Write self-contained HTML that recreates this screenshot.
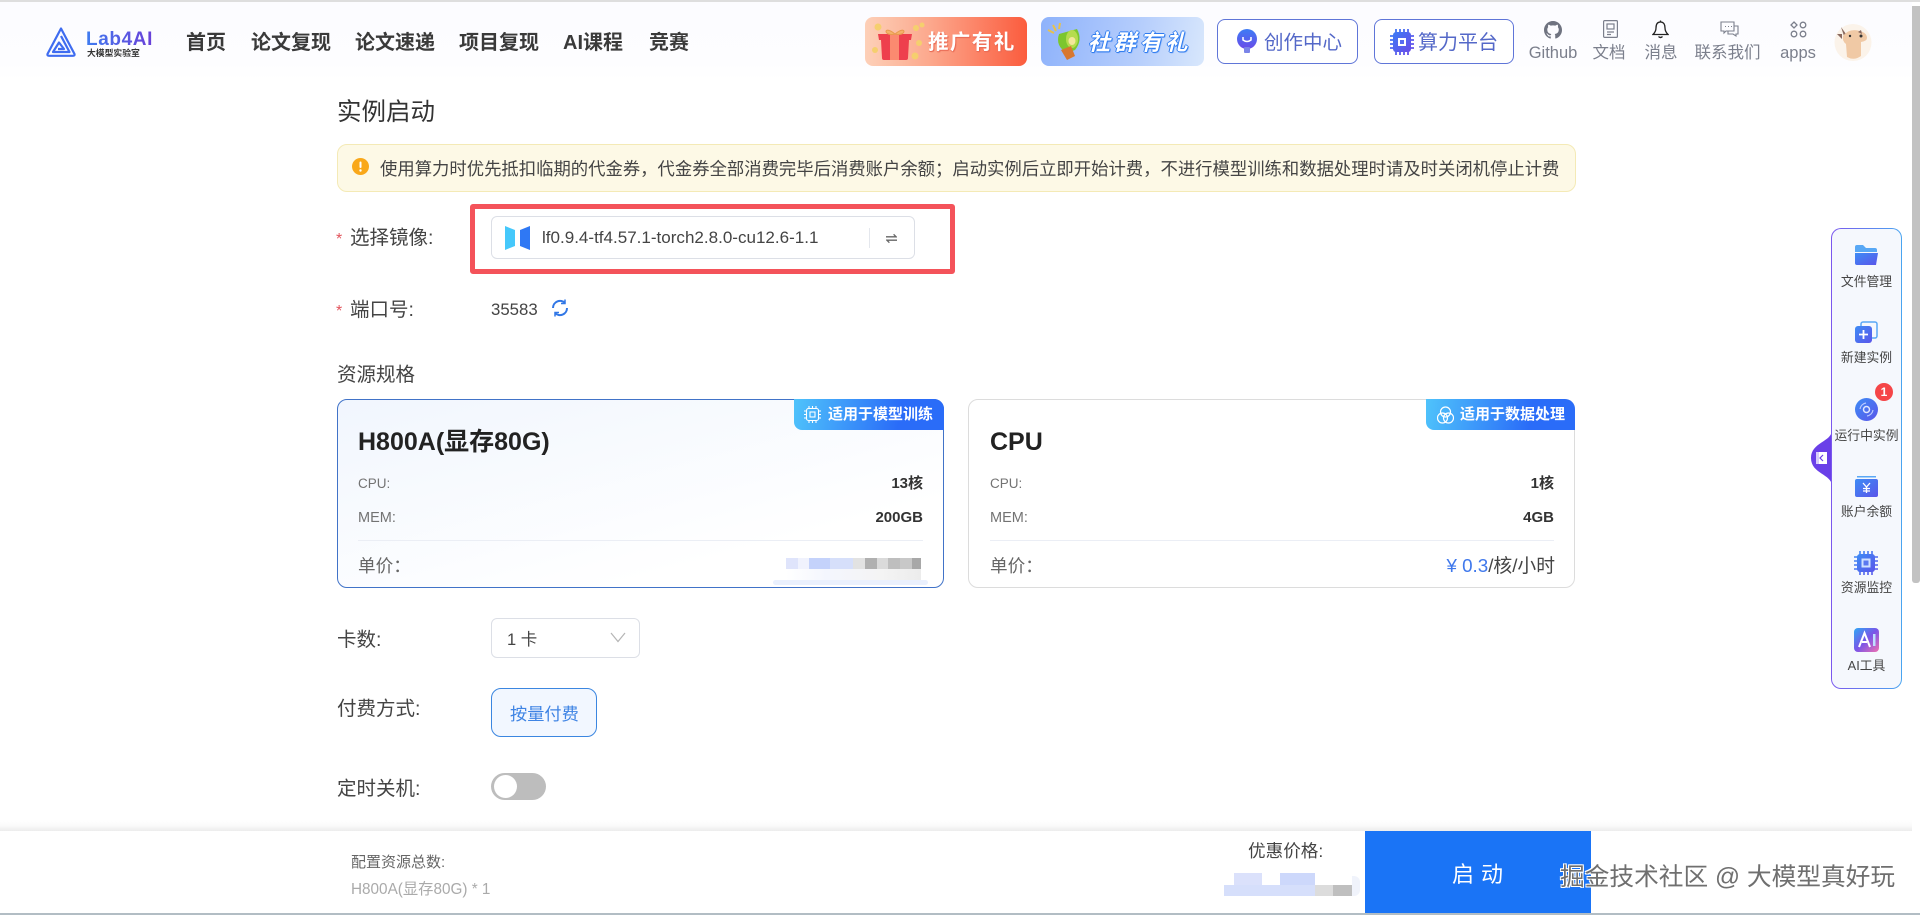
<!DOCTYPE html>
<html lang="zh">
<head>
<meta charset="utf-8">
<title>实例启动</title>
<style>
html,body{margin:0;padding:0;width:1920px;height:915px;overflow:hidden;background:#fff}
body{position:relative;font-family:"Liberation Sans","Noto Sans CJK SC",sans-serif;color:#333}
.t{position:absolute;line-height:30px;height:30px;white-space:nowrap}
.b{position:absolute;box-sizing:border-box}
svg{position:absolute;display:block}
.nav{font-size:20px;font-weight:700;color:#3a3a3a;top:28px}
.top{font-size:16.5px;color:#7b7f8c;top:38px;text-align:center;transform:translateX(-50%)}
.lbl{font-size:19.5px;color:#444}
.star{font-size:16px;color:#e2545c}
.gray{color:#737373}
.val{font-size:15px;font-weight:700;color:#333;text-align:right}
.tag{position:absolute;top:399px;height:31px;border-radius:0 10px 0 8px;background:linear-gradient(100deg,#4fc3fb,#2a6cf8 70%)}
.tagt{font-size:15px;font-weight:700;color:#fff;top:400px}
.side{font-size:12.8px;color:#444;left:1831px;width:71px;text-align:center}
.m{position:absolute}
</style>
</head>
<body>
<div class="b" style="left:0;top:0;width:1920px;height:2px;background:#dedede"></div>
<div class="b" style="left:0;top:2px;width:1912px;height:78px;background:linear-gradient(#fcfcff,#fdfdff 80%,#fff)"></div>

<!-- logo -->
<svg style="left:46px;top:27px" width="30" height="30" viewBox="0 0 30 30" fill="none" stroke="#3f6cf0" stroke-width="2.200" stroke-linejoin="round">
<path d="M15 1.500 L28.500 27 Q29 28.800 27 28.800 L3 28.800 Q1 28.800 1.500 27 Z"/>
<path d="M15 9 L23.500 25 L7 25 L13 15.500 L18 22 L12 22"/>
</svg>
<div class="t" style="left:86px;top:25px;font-size:19px;letter-spacing:.6px;font-weight:700;background:linear-gradient(90deg,#3f7cf0,#6a3fd8);-webkit-background-clip:text;background-clip:text;color:transparent">Lab4AI</div>
<div class="t" style="left:87px;top:38px;font-size:8.800px;font-weight:700;color:#333">大模型实验室</div>

<!-- nav -->
<div class="t nav" style="left:186px">首页</div>
<div class="t nav" style="left:251px">论文复现</div>
<div class="t nav" style="left:355px">论文速递</div>
<div class="t nav" style="left:459px">项目复现</div>
<div class="t nav" style="left:563px">AI课程</div>
<div class="t nav" style="left:649px">竞赛</div>

<!-- promo buttons -->
<div class="b" style="left:865px;top:17px;width:162px;height:49px;border-radius:8px;background:linear-gradient(90deg,#fdd0b8,#fca88d 40%,#fb5c3e)"></div>
<svg style="left:870px;top:20px" width="60" height="44" viewBox="0 0 60 44">
<circle cx="8" cy="7" r="3.500" fill="#f5cf6e"/><circle cx="46" cy="8" r="3" fill="#f5cf6e"/><circle cx="52" cy="5" r="2.500" fill="#f5cf6e"/><circle cx="5" cy="30" r="3" fill="#f5cf6e"/><circle cx="49" cy="23" r="3" fill="#f5cf6e"/><circle cx="45" cy="36" r="3.500" fill="#f5cf6e"/>
<path d="M8 14 L42 14 L41 20 L39 20 L38 38 Q38 40 36 40 L14 40 Q12 40 12 38 L11 20 L9 20 Z" fill="#ee3f4d"/>
<rect x="20" y="14" width="9" height="26" fill="#fb8a70"/>
<path d="M25 14 C13 4 13 17 25 14 C37 4 37 17 25 14" fill="#f4b26a" stroke="#e89a4e"/>
</svg>
<div class="t" style="left:928px;top:28px;font-size:20.500px;font-weight:700;letter-spacing:1.400px;color:#fff;text-shadow:0 1px 0 #ea6e58,1px 1px 1px #e8644e">推广有礼</div>

<div class="b" style="left:1041px;top:17px;width:163px;height:49px;border-radius:8px;background:linear-gradient(100deg,#8eb2fb,#b6cefc 60%,#d8e7fc)"></div>
<svg style="left:1047px;top:22px" width="40" height="40" viewBox="0 0 40 40">
<path d="M6 3 L9 9 M1 8 L7 11 M13 1 L12 7" stroke="#e8c24c" stroke-width="2"/>
<path d="M12 12 L30 7 Q36 18 28 28 L20 31 Q8 24 12 12Z" fill="#7cc62e"/>
<ellipse cx="25" cy="17" rx="6" ry="9" fill="#b5dc4e"/><ellipse cx="25" cy="19" rx="3.500" ry="4" fill="#f4e79a"/>
<path d="M14 28 L24 24 L28 34 L20 38 Z" fill="#d8772f"/>
</svg>
<div class="t" style="left:1088px;top:28px;font-size:22px;font-weight:700;font-style:italic;letter-spacing:3.800px;color:#fff;text-shadow:1px 0 0 #2f7cf0,-1px 0 0 #2f7cf0,0 1px 0 #2f7cf0,0 -1px 0 #2f7cf0,1px 1px 1px #2f7cf0">社群有礼</div>

<!-- outline buttons -->
<div class="b" style="left:1217px;top:19px;width:141px;height:45px;border:1.500px solid #5f75d8;border-radius:8px;background:#fff"></div>
<svg style="left:1235px;top:29px" width="24" height="26" viewBox="0 0 24 26">
<defs><linearGradient id="g1" x1="0" y1="0" x2="0" y2="1"><stop offset="0" stop-color="#3d7cf5"/><stop offset="1" stop-color="#6a4be8"/></linearGradient></defs>
<circle cx="12" cy="10" r="10" fill="url(#g1)"/><rect x="9" y="18" width="6" height="6" rx="1" fill="#7a84e8"/>
<path d="M8 8 L8 11 Q12 14 16 11 L16 8" fill="none" stroke="#fff" stroke-width="1.500"/>
</svg>
<div class="t" style="left:1264px;top:28px;font-size:19.500px;color:#5468c8">创作中心</div>
<div class="b" style="left:1374px;top:19px;width:140px;height:45px;border:1.500px solid #5f75d8;border-radius:8px;background:#fff"></div>
<svg style="left:1390px;top:29px" width="24" height="26" viewBox="0 0 24 26">
<defs><linearGradient id="g2" x1="0" y1="0" x2="1" y2="1"><stop offset="0" stop-color="#3d7cf5"/><stop offset="1" stop-color="#6a4be8"/></linearGradient></defs>
<path d="M6 0V26M10 0V26M14 0V26M18 0V26M0 7H24M0 11H24M0 15H24M0 19H24" stroke="url(#g2)" stroke-width="1.800"/>
<rect x="3" y="3" width="18" height="20" rx="3" fill="url(#g2)"/>
<rect x="8" y="9" width="8" height="8" fill="#fff"/><rect x="10" y="11" width="4" height="4" fill="#5a6cf0"/>
</svg>
<div class="t" style="left:1418px;top:28px;font-size:20px;color:#5468c8">算力平台</div>

<!-- right header icons -->
<svg style="left:1544px;top:21px" width="18" height="18" viewBox="0 0 16 16"><path fill="#6f7380" d="M8 0C3.580 0 0 3.580 0 8c0 3.540 2.290 6.530 5.470 7.590.4.070.55-.17.55-.38 0-.19-.01-.82-.01-1.490-2.010.37-2.530-.49-2.690-.94-.09-.23-.48-.94-.82-1.130-.28-.15-.68-.52-.01-.53.63-.01 1.080.58 1.230.82.720 1.210 1.870.87 2.330.66.070-.52.280-.87.510-1.070-1.780-.2-3.640-.89-3.640-3.950 0-.87.310-1.590.820-2.150-.08-.2-.36-1.020.08-2.120 0 0 .67-.21 2.200.82.640-.18 1.320-.27 2-.27s1.360.09 2 .27c1.530-1.040 2.200-.82 2.200-.82.440 1.100.160 1.920.080 2.120.510.560.820 1.270.820 2.150 0 3.070-1.870 3.750-3.650 3.950.29.250.540.730.540 1.480 0 1.070-.01 1.930-.01 2.200 0 .21.150.46.550.38A8.010 8.010 0 0 0 16 8c0-4.420-3.580-8-8-8z"/></svg>
<div class="t top" style="left:1553px">Github</div>
<svg style="left:1603px;top:20px" width="15" height="18" viewBox="0 0 15 18" fill="none" stroke="#7b7f8c" stroke-width="1.200"><rect x=".6" y=".6" width="13.800" height="16.800" rx="1"/><rect x="4" y="4" width="7" height="5"/><path d="M4 12H11M4 14.500H8"/></svg>
<div class="t top" style="left:1609px">文档</div>
<svg style="left:1652px;top:20px" width="17" height="19" viewBox="0 0 17 19" fill="none" stroke="#222" stroke-width="1.300"><path d="M8.500 2C5 2 4 5 4 8 C4 11 3 12.500 1 14.500 L16 14.500 C14 12.500 13 11 13 8 C13 5 12 2 8.500 2Z"/><path d="M8.500 .5V2M6.500 16.500Q8.500 18.500 10.500 16.500"/></svg>
<div class="t top" style="left:1661px">消息</div>
<svg style="left:1720px;top:21px" width="19" height="17" viewBox="0 0 19 17" fill="none" stroke="#7b7f8c" stroke-width="1.100"><path d="M1 1H14V10H6L4 12V10H1Z"/><path d="M14 5H18V13H16V15L13 13H8V10.500"/><path d="M5 5.500H6M8 5.500H9M11 5.500H12"/></svg>
<div class="t top" style="left:1727.500px">联系我们</div>
<svg style="left:1790px;top:21px" width="17" height="17" viewBox="0 0 17 17" fill="none" stroke="#7b7f8c" stroke-width="1.300"><path d="M4 1L7 4L4 7L1 4Z"/><circle cx="13" cy="4" r="2.800"/><circle cx="4" cy="13" r="2.800"/><circle cx="13" cy="13" r="2.800"/></svg>
<div class="t top" style="left:1798px">apps</div>
<svg style="left:1834px;top:24px" width="38" height="37" viewBox="0 0 38 37">
<circle cx="19" cy="18.500" r="18.500" fill="#fbf3ea"/>
<path d="M7 3 L10 12 L12 10 Z M3 10 L8 15 L8 10Z" fill="#8a6a60"/>
<path d="M9 12 Q15 4 26 7 Q33 9 33 14 Q33 17 27 18 L27 32 Q20 37 13 33 L12 20 Q8 17 9 12Z" fill="#f0c9a5"/>
<path d="M22 3 L24 8 L27 6 L28 10 L24 8Z" fill="#8a6a60"/>
<circle cx="27" cy="12" r="1.500" fill="#333"/><circle cx="16" cy="12" r="1.200" fill="#333"/>
</svg>

<!-- scrollbar -->
<div class="b" style="left:1912px;top:6px;width:8px;height:577px;background:#c2c2c2;border-radius:0 0 3px 3px"></div>

<!-- title -->
<div class="t" style="left:337px;top:98px;font-size:24.500px;color:#333">实例启动</div>

<!-- alert -->
<div class="b" style="left:337px;top:144px;width:1239px;height:48px;background:#fdf9e6;border:1px solid #f4eab6;border-radius:10px"></div>
<svg style="left:352px;top:158px" width="17" height="17" viewBox="0 0 17 17"><circle cx="8.500" cy="8.500" r="8.500" fill="#f9a81a"/><rect x="7.500" y="3.500" width="2" height="6.500" rx="1" fill="#fff"/><circle cx="8.500" cy="12.500" r="1.200" fill="#fff"/></svg>
<div class="t" style="left:380px;top:154px;font-size:17.350px;color:#444">使用算力时优先抵扣临期的代金券，代金券全部消费完毕后消费账户余额；启动实例后立即开始计费，不进行模型训练和数据处理时请及时关闭机停止计费</div>

<!-- image select -->
<div class="t star" style="left:336px;top:225px">*</div>
<div class="t lbl" style="left:350px;top:223px">选择镜像:</div>
<div class="b" style="left:470px;top:204px;width:485px;height:70px;border:5px solid #f4535a;border-radius:3px"></div>
<div class="b" style="left:491px;top:216px;width:424px;height:43px;border:1px solid #dcdfe6;border-radius:6px;background:#fff"></div>
<svg style="left:505px;top:226px" width="25" height="24" viewBox="0 0 25 24"><path d="M0 0 L10 4 L10 20 L0 24Z" fill="#45c8fb"/><path d="M15 4 L25 0 L25 24 L15 20Z" fill="#2f78f4"/></svg>
<div class="t" style="left:542px;top:223px;font-size:17.050px;color:#444">lf0.9.4-tf4.57.1-torch2.8.0-cu12.6-1.1</div>
<div class="b" style="left:869px;top:228px;width:1px;height:20px;background:#e4e7ed"></div>
<svg style="left:886px;top:233px" width="11" height="11" viewBox="0 0 13 12" fill="none" stroke="#666" stroke-width="1.500"><path d="M0 4H12L9 1M13 8H1L4 11"/></svg>

<!-- port -->
<div class="t star" style="left:336px;top:297px">*</div>
<div class="t lbl" style="left:350px;top:295px">端口号:</div>
<div class="t" style="left:491px;top:295px;font-size:16.800px;color:#444">35583</div>
<svg style="left:551px;top:299px" width="18" height="18" viewBox="0 0 18 18" fill="none" stroke="#3177e6" stroke-width="2"><path d="M16 9A7 7 0 0 1 4 14M2 9A7 7 0 0 1 14 4"/><path d="M14 .5V4.500H10M4 17.500V13.500H8" stroke-width="1.500"/></svg>

<!-- specs -->
<div class="t lbl" style="left:337px;top:360px">资源规格</div>

<div class="b" style="left:337px;top:399px;width:607px;height:189px;border:1.500px solid #4173c8;border-radius:10px;background:linear-gradient(165deg,#f1f6fe,#fff 75%)"></div>
<div class="tag" style="left:794px;width:150px"></div>
<svg style="left:804px;top:406px" width="17" height="17" viewBox="0 0 17 17" fill="none" stroke="#fff" stroke-width="1.100"><rect x="2.500" y="2.500" width="12" height="12" rx="2"/><rect x="6" y="6" width="5" height="5"/><path d="M5 0V2M8.500 0V2M12 0V2M5 15V17M8.500 15V17M12 15V17M0 5H2M0 8.500H2M0 12H2M15 5H17M15 8.500H17M15 12H17"/></svg>
<div class="t tagt" style="left:828px">适用于模型训练</div>
<div class="t" style="left:358px;top:427px;font-size:25px;font-weight:700;color:#222">H800A(显存80G)</div>
<div class="t gray" style="left:358px;top:469px;font-size:13.500px">CPU:</div>
<div class="t val" style="right:997px;top:469px">13核</div>
<div class="t gray" style="left:358px;top:503px;font-size:14.500px">MEM:</div>
<div class="t val" style="right:997px;top:503px">200GB</div>
<div class="b" style="left:358px;top:540px;width:565px;height:1px;background:#ebeef5"></div>
<div class="t" style="left:358px;top:551px;font-size:17.600px;color:#666">单价：</div>
<div class="m" style="left:786px;top:558px;width:12px;height:11px;background:#dfe4fb"></div>
<div class="m" style="left:798px;top:558px;width:11px;height:11px;background:#f0f2fd"></div>
<div class="m" style="left:809px;top:558px;width:21px;height:11px;background:#c4d2fb"></div>
<div class="m" style="left:830px;top:558px;width:23px;height:11px;background:#d6dffa"></div>
<div class="m" style="left:853px;top:558px;width:12px;height:11px;background:#e2e2e2"></div>
<div class="m" style="left:865px;top:558px;width:12px;height:11px;background:#b0b0b0"></div>
<div class="m" style="left:877px;top:558px;width:11px;height:11px;background:#dadada"></div>
<div class="m" style="left:888px;top:558px;width:12px;height:11px;background:#bebebe"></div>
<div class="m" style="left:900px;top:558px;width:12px;height:11px;background:#c8c8c8"></div>
<div class="m" style="left:912px;top:558px;width:9px;height:11px;background:#a8a8a8"></div>
<div class="m" style="left:786px;top:569px;width:135px;height:11px;background:linear-gradient(90deg,#fff,#f4f6fe 30%,#f4f4f4 70%,#ececec)"></div>
<div class="m" style="left:773px;top:580px;width:155px;height:5px;background:#eaf0fd;border-radius:3px"></div>

<div class="b" style="left:968px;top:399px;width:607px;height:189px;border:1.500px solid #dcdcdc;border-radius:10px;background:#fff"></div>
<div class="tag" style="left:1426px;width:149px"></div>
<svg style="left:1437px;top:406px" width="17" height="18" viewBox="0 0 17 18" fill="none" stroke="#fff" stroke-width="1.200"><circle cx="8.500" cy="6" r="5"/><circle cx="5.500" cy="12" r="5"/><circle cx="11.500" cy="12" r="5"/></svg>
<div class="t tagt" style="left:1460px">适用于数据处理</div>
<div class="t" style="left:990px;top:427px;font-size:25px;font-weight:700;color:#222">CPU</div>
<div class="t gray" style="left:990px;top:469px;font-size:13.500px">CPU:</div>
<div class="t val" style="right:366px;top:469px">1核</div>
<div class="t gray" style="left:990px;top:503px;font-size:14.500px">MEM:</div>
<div class="t val" style="right:366px;top:503px">4GB</div>
<div class="b" style="left:990px;top:540px;width:564px;height:1px;background:#ebeef5"></div>
<div class="t" style="left:990px;top:551px;font-size:17.600px;color:#666">单价：</div>
<div class="t" style="right:365px;top:551px;font-size:18.800px;color:#444"><span style="color:#3f78ec">¥ 0.3</span>/核/小时</div>

<!-- form rows -->
<div class="t lbl" style="left:337px;top:625px">卡数:</div>
<div class="b" style="left:491px;top:618px;width:149px;height:40px;border:1px solid #dcdfe6;border-radius:6px;background:#fff"></div>
<div class="t" style="left:507px;top:625px;font-size:16.500px;color:#444">1 卡</div>
<svg style="left:610px;top:632px" width="16" height="11" viewBox="0 0 16 11" fill="none" stroke="#b5b5b5" stroke-width="1.200"><path d="M1 1L8 9.500L15 1"/></svg>

<div class="t lbl" style="left:337px;top:694px">付费方式:</div>
<div class="b" style="left:491px;top:688px;width:106px;height:49px;border:1.500px solid #3b86e0;border-radius:10px;background:#f2f7ff"></div>
<div class="t" style="left:510px;top:699px;font-size:17.200px;color:#3f84e4">按量付费</div>

<div class="t lbl" style="left:337px;top:774px">定时关机:</div>
<div class="b" style="left:491px;top:773px;width:55px;height:27px;border-radius:14px;background:#bdbdbd"></div>
<div class="b" style="left:494px;top:775px;width:23px;height:23px;border-radius:50%;background:#fff"></div>

<!-- bottom bar -->
<div class="b" style="left:0;top:820px;width:1912px;height:11px;background:linear-gradient(#fff,#fafafa 50%,#ececec)"></div>
<div class="b" style="left:0;top:831px;width:1920px;height:84px;background:#fff"></div>
<div class="b" style="left:0;top:913px;width:1920px;height:2px;background:#b2bdc4"></div>
<div class="t" style="left:351px;top:848px;font-size:15px;color:#666">配置资源总数:</div>
<div class="t" style="left:351px;top:875px;font-size:15.300px;color:#aaa">H800A(显存80G) * 1</div>
<div class="t" style="left:1248px;top:836px;font-size:17.600px;color:#444">优惠价格:</div>
<div class="m" style="left:1234px;top:873px;width:28px;height:12px;background:#dbe1fb"></div>
<div class="m" style="left:1280px;top:873px;width:35px;height:12px;background:#cdd8fb"></div>
<div class="m" style="left:1224px;top:885px;width:91px;height:11px;background:#d6dffb"></div>
<div class="m" style="left:1315px;top:885px;width:18px;height:11px;background:#dcdcdc"></div>
<div class="m" style="left:1333px;top:885px;width:19px;height:11px;background:#bfbfbf"></div>
<div class="m" style="left:1352px;top:876px;width:8px;height:20px;background:#f0f3fb;border-radius:0 6px 6px 0"></div>
<div class="b" style="left:1365px;top:831px;width:226px;height:82px;background:#1a74f6"></div>
<div class="t" style="left:1452px;top:860px;font-size:22px;letter-spacing:7px;color:#fff">启动</div>
<div class="t" style="left:1560px;top:863px;font-size:24.700px;color:#6f6f6f;text-shadow:1px 1px 0 #fff,-1px -1px 0 #fff,1px -1px 0 #fff,-1px 1px 0 #fff">掘金技术社区 @ 大模型真好玩</div>

<!-- side panel -->
<div class="b" style="left:1811px;top:430px;width:21px;height:56px;"><svg style="left:0;top:0" width="21" height="56" viewBox="0 0 21 56"><path d="M21 0 C21 12 0 12 0 28 C0 44 21 44 21 56Z" fill="#6a3fe8"/><rect x="5" y="22" width="11" height="12" fill="#fff"/><path d="M12 25L9 28L12 31" fill="none" stroke="#6a3fe8" stroke-width="1.200"/><rect x="5" y="22" width="3" height="12" fill="#d8ccfa"/></svg></div>
<div class="b" style="left:1831px;top:228px;width:71px;height:461px;border-radius:10px;padding:1px;background:linear-gradient(90deg,#7b58ee,#4aa5f0)"><div style="width:100%;height:100%;background:#f5f8fd;border-radius:9px"></div></div>
<svg style="left:1855px;top:245px" width="23" height="20" viewBox="0 0 23 20"><defs><linearGradient id="g3" x1="0" y1="0" x2="1" y2="1"><stop offset="0" stop-color="#3d8cf5"/><stop offset="1" stop-color="#5a55ea"/></linearGradient></defs><path d="M0 2Q0 0 2 0H8L11 3H20Q22 3 22 5V7H0Z" fill="#58a8f5"/><path d="M0 8H23L21 20H2Q0 20 0 18Z" fill="url(#g3)"/></svg>
<div class="t side" style="top:267px">文件管理</div>
<svg style="left:1855px;top:321px" width="23" height="22" viewBox="0 0 23 22"><rect x="6" y="1" width="16" height="16" rx="2" fill="none" stroke="#5aa8f5" stroke-width="1.500"/><rect x="0" y="5" width="17" height="17" rx="3" fill="url(#g3)"/><path d="M8.500 9V18M4 13.500H13" stroke="#fff" stroke-width="1.800"/></svg>
<div class="t side" style="top:343px">新建实例</div>
<svg style="left:1855px;top:398px" width="23" height="23" viewBox="0 0 23 23"><circle cx="11.500" cy="11.500" r="11.500" fill="url(#g3)"/><circle cx="11.500" cy="11.500" r="3" fill="none" stroke="#dfe6ff" stroke-width="1.500"/><path d="M5 11A7 7 0 0 1 11 5M18 12A7 7 0 0 1 12 18" fill="none" stroke="#b8c8ff" stroke-width="1.200"/></svg>
<div class="b" style="left:1875px;top:383px;width:18px;height:18px;border-radius:50%;background:#f54648;color:#fff;font-size:12px;font-weight:700;line-height:18px;text-align:center">1</div>
<div class="t side" style="top:421px">运行中实例</div>
<svg style="left:1855px;top:476px" width="23" height="21" viewBox="0 0 23 21"><rect x="2" y="0" width="19" height="1.500" fill="#5aa8f5"/><rect x="0" y="3" width="23" height="18" rx="2" fill="url(#g3)"/><path d="M8 7L11.500 11L15 7M11.500 11V17M8 12.500H15M8 15H15" fill="none" stroke="#fff" stroke-width="1.300"/></svg>
<div class="t side" style="top:497px">账户余额</div>
<svg style="left:1854px;top:551px" width="24" height="24" viewBox="0 0 24 24"><path d="M6 0V24M10 0V24M14 0V24M18 0V24M0 6H24M0 10H24M0 14H24M0 18H24" stroke="url(#g3)" stroke-width="1.600"/><rect x="3" y="3" width="18" height="18" rx="3" fill="url(#g3)"/><rect x="7.500" y="7.500" width="9" height="9" fill="#cfe0ff"/><rect x="9.500" y="9.500" width="5" height="5" fill="#5a78f0"/></svg>
<div class="t side" style="top:573px">资源监控</div>
<svg style="left:1854px;top:628px" width="25" height="24" viewBox="0 0 25 24"><defs><linearGradient id="g4" x1="0" y1="0" x2="1" y2="1"><stop offset="0" stop-color="#2fa8f5"/><stop offset=".5" stop-color="#7a55e8"/><stop offset="1" stop-color="#f070b0"/></linearGradient></defs><rect width="25" height="24" rx="4" fill="url(#g4)"/><path d="M5 19L10.500 5L16 19M8 14H13" fill="none" stroke="#fff" stroke-width="2"/><rect x="19" y="6" width="2.500" height="12" fill="#bfe0ff"/></svg>
<div class="t side" style="top:651px">AI工具</div>
</body>
</html>
